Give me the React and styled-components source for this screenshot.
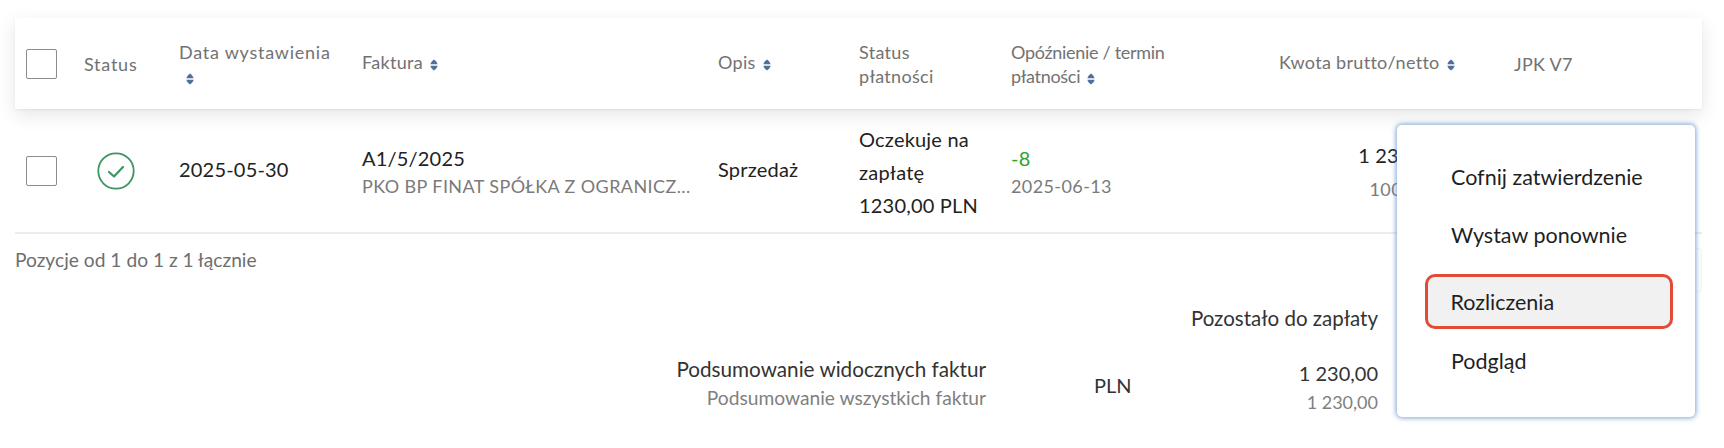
import React from "react";
import styled, { createGlobalStyle } from "styled-components";

const Global = createGlobalStyle`
  html, body { margin: 0; padding: 0; background: #fff; }
  body { font-family: "Lato", "Noto Sans", sans-serif; color: #222; }
`;

const Page = styled.div`
  position: relative;
  width: 1724px;
  height: 448px;
  overflow: hidden;
  padding: 18px 22px 0 15px;
  box-sizing: border-box;
`;

const columns = "69px 95px 183px 356px 141px 152px 268px 235px 188px";

const HeadRow = styled.div`
  display: grid;
  grid-template-columns: ${columns};
  height: 91px;
  align-items: center;
  background: #fff;
  box-shadow: 0 6px 18px rgba(0, 0, 0, 0.1), 0 1px 2px rgba(0, 0, 0, 0.06);
  color: #727272;
  font-size: 18px;
  line-height: 24px;
`;

const BodyRow = styled.div`
  display: grid;
  grid-template-columns: ${columns};
  height: 123px;
  align-items: center;
  border-bottom: 2px solid #ececec;
  font-size: 20px;
  letter-spacing: 0.2px;
  color: #222;
`;

const CheckCell = styled.div`
  padding-left: 11px;
  display: flex;
  align-items: center;
`;

const Box = styled.span`
  width: 31px;
  height: 30px;
  box-sizing: border-box;
  border: 1.5px solid #8c8c8c;
  border-radius: 2px;
  background: #fff;
  display: block;
`;

const IconCell = styled.div`
  display: flex;
  padding-left: 13px;
`;

const Head = styled.div`
  letter-spacing: ${(p) => p.$ls ?? 0.3}px;
  white-space: nowrap;
  margin-bottom: ${(p) => (p.$lift ? "4px" : "0")};
`;

const Plain = styled.div`
  padding-bottom: 3px;
`;

const Stack = styled.div`
  padding-top: 4px;
`;

const Amount = styled.div`
  text-align: right;
  padding: 3px 75px 0 0;
  white-space: nowrap;
`;

const Muted = styled.div`
  font-size: 18px;
  color: #7a7a7a;
  line-height: 28px;
  letter-spacing: 0.4px;
  margin-top: ${(p) => (p.$gap ? "6px" : "0")};
`;

const Strong = styled.div`
  line-height: 27px;
  white-space: nowrap;
`;

const Delay = styled.div`
  color: #2aa52a;
  line-height: 27px;
`;

const Pay = styled.div`
  line-height: 33px;
  padding-top: 3px;
`;

const SortSvg = styled.svg`
  display: inline-block;
  width: 8px;
  height: 12px;
  margin-left: 7px;
  vertical-align: -2px;
`;

const Sort = () => (
  <SortSvg viewBox="0 0 8 12" aria-hidden="true">
    <path d="M4 0.5 C5.6 1.6 7.2 3.4 7.6 5.3 H0.4 C0.8 3.4 2.4 1.6 4 0.5 Z M0.4 6.7 H7.6 C7.2 8.6 5.6 10.4 4 11.5 C2.4 10.4 0.8 8.6 0.4 6.7 Z" fill="#4f6f9f" />
  </SortSvg>
);

const FooterRow = styled.div`
  display: flex;
  justify-content: space-between;
  height: 24px;
  margin-top: 14px;
`;

const FooterInfo = styled.div`
  font-size: 19.2px;
  line-height: 24px;
  color: #6e6e6e;
`;

const Pager = styled.div`
  width: 100px;
  height: 44px;
  flex: none;
  box-sizing: border-box;
  border: 1px solid #f3f3f3;
  border-radius: 4px;
`;

const SummaryHead = styled.div`
  width: 1363px;
  margin-top: 34px;
  text-align: right;
  font-size: 20.5px;
  color: #333;
  white-space: nowrap;
`;

const SummaryRow = styled.div`
  display: grid;
  grid-template-columns: 971px 108px 284px;
  margin-top: 24px;
  align-items: start;
`;

const SumCol = styled.div`
  text-align: right;
  white-space: nowrap;
  padding-top: ${(p) => p.$top || 0}px;
`;

const SumMain = styled.div`
  font-size: ${(p) => p.$size || 20.7}px;
  line-height: 30px;
  color: #333;
`;

const SumSub = styled.div`
  font-size: ${(p) => p.$size || 19.2}px;
  line-height: 28px;
  color: #808080;
`;

const Cur = styled.div`
  font-size: 20px;
  line-height: 24px;
  padding: 19px 0 0 108px;
  white-space: nowrap;
  color: #333;
`;

const Menu = styled.div`
  position: absolute;
  left: 1397px;
  top: 125px;
  width: 298px;
  height: 292px;
  box-sizing: border-box;
  padding: 23px 22px 0 28px;
  background: #fff;
  border-radius: 5px;
  box-shadow: 0 0 5px 1px rgba(70, 125, 195, 0.7);
  display: flex;
  flex-direction: column;
`;

const MenuItem = styled.div`
  height: ${(p) => (p.$active ? "55px" : "58px")};
  flex: none;
  box-sizing: border-box;
  display: flex;
  align-items: center;
  padding-left: 26px;
  font-size: 21.5px;
  color: #1f1f1f;
  border-radius: 10px;
  ${(p) => p.$active && "background:#f1f1f1;border:3.5px solid #e14b37;padding-left:22.5px;margin:10px 0 3px;"}
`;

export default function App() {
  return (
    <Page>
      <Global />
      <HeadRow>
        <CheckCell><Box /></CheckCell>
        <Head $ls={0.75}>Status</Head>
        <Head $ls={0.75}>Data wystawienia<br /><Sort /></Head>
        <Head $lift>Faktura<Sort /></Head>
        <Head $lift>Opis<Sort /></Head>
        <Head>Status<br />płatności</Head>
        <Head $ls={-0.3}>Opóźnienie / termin<br />płatności<Sort /></Head>
        <Head $lift>Kwota brutto/netto<Sort /></Head>
        <Head>JPK V7</Head>
      </HeadRow>
      <BodyRow>
        <CheckCell><Box /></CheckCell>
        <IconCell>
          <svg width="38" height="38" viewBox="0 0 38 38" fill="none" aria-hidden="true">
            <circle cx="19" cy="19" r="17.7" stroke="#3f9463" strokeWidth="1.8" />
            <path d="M12 20 L17 24.5 L26 15" stroke="#3f9463" strokeWidth="2.2" strokeLinecap="round" strokeLinejoin="round" />
          </svg>
        </IconCell>
        <Plain>2025-05-30</Plain>
        <Stack>
          <Strong>A1/5/2025</Strong>
          <Muted>PKO BP FINAT SPÓŁKA Z OGRANICZ...</Muted>
        </Stack>
        <Plain>Sprzedaż</Plain>
        <Pay>Oczekuje na<br />zapłatę<br />1230,00 PLN</Pay>
        <Stack>
          <Delay>-8</Delay>
          <Muted>2025-06-13</Muted>
        </Stack>
        <Amount>
          <Strong>1 230,00</Strong>
          <Muted $gap>1000,00</Muted>
        </Amount>
        <div />
      </BodyRow>
      <FooterRow>
        <FooterInfo>Pozycje od 1 do 1 z 1 łącznie</FooterInfo>
        <Pager />
      </FooterRow>
      <SummaryHead>Pozostało do zapłaty</SummaryHead>
      <SummaryRow>
        <SumCol>
          <SumMain>Podsumowanie widocznych faktur</SumMain>
          <SumSub>Podsumowanie wszystkich faktur</SumSub>
        </SumCol>
        <Cur>PLN</Cur>
        <SumCol $top={4}>
          <SumMain $size={20}>1 230,00</SumMain>
          <SumSub $size={18}>1 230,00</SumSub>
        </SumCol>
      </SummaryRow>
      <Menu>
        <MenuItem>Cofnij zatwierdzenie</MenuItem>
        <MenuItem>Wystaw ponownie</MenuItem>
        <MenuItem $active>Rozliczenia</MenuItem>
        <MenuItem>Podgląd</MenuItem>
      </Menu>
    </Page>
  );
}
